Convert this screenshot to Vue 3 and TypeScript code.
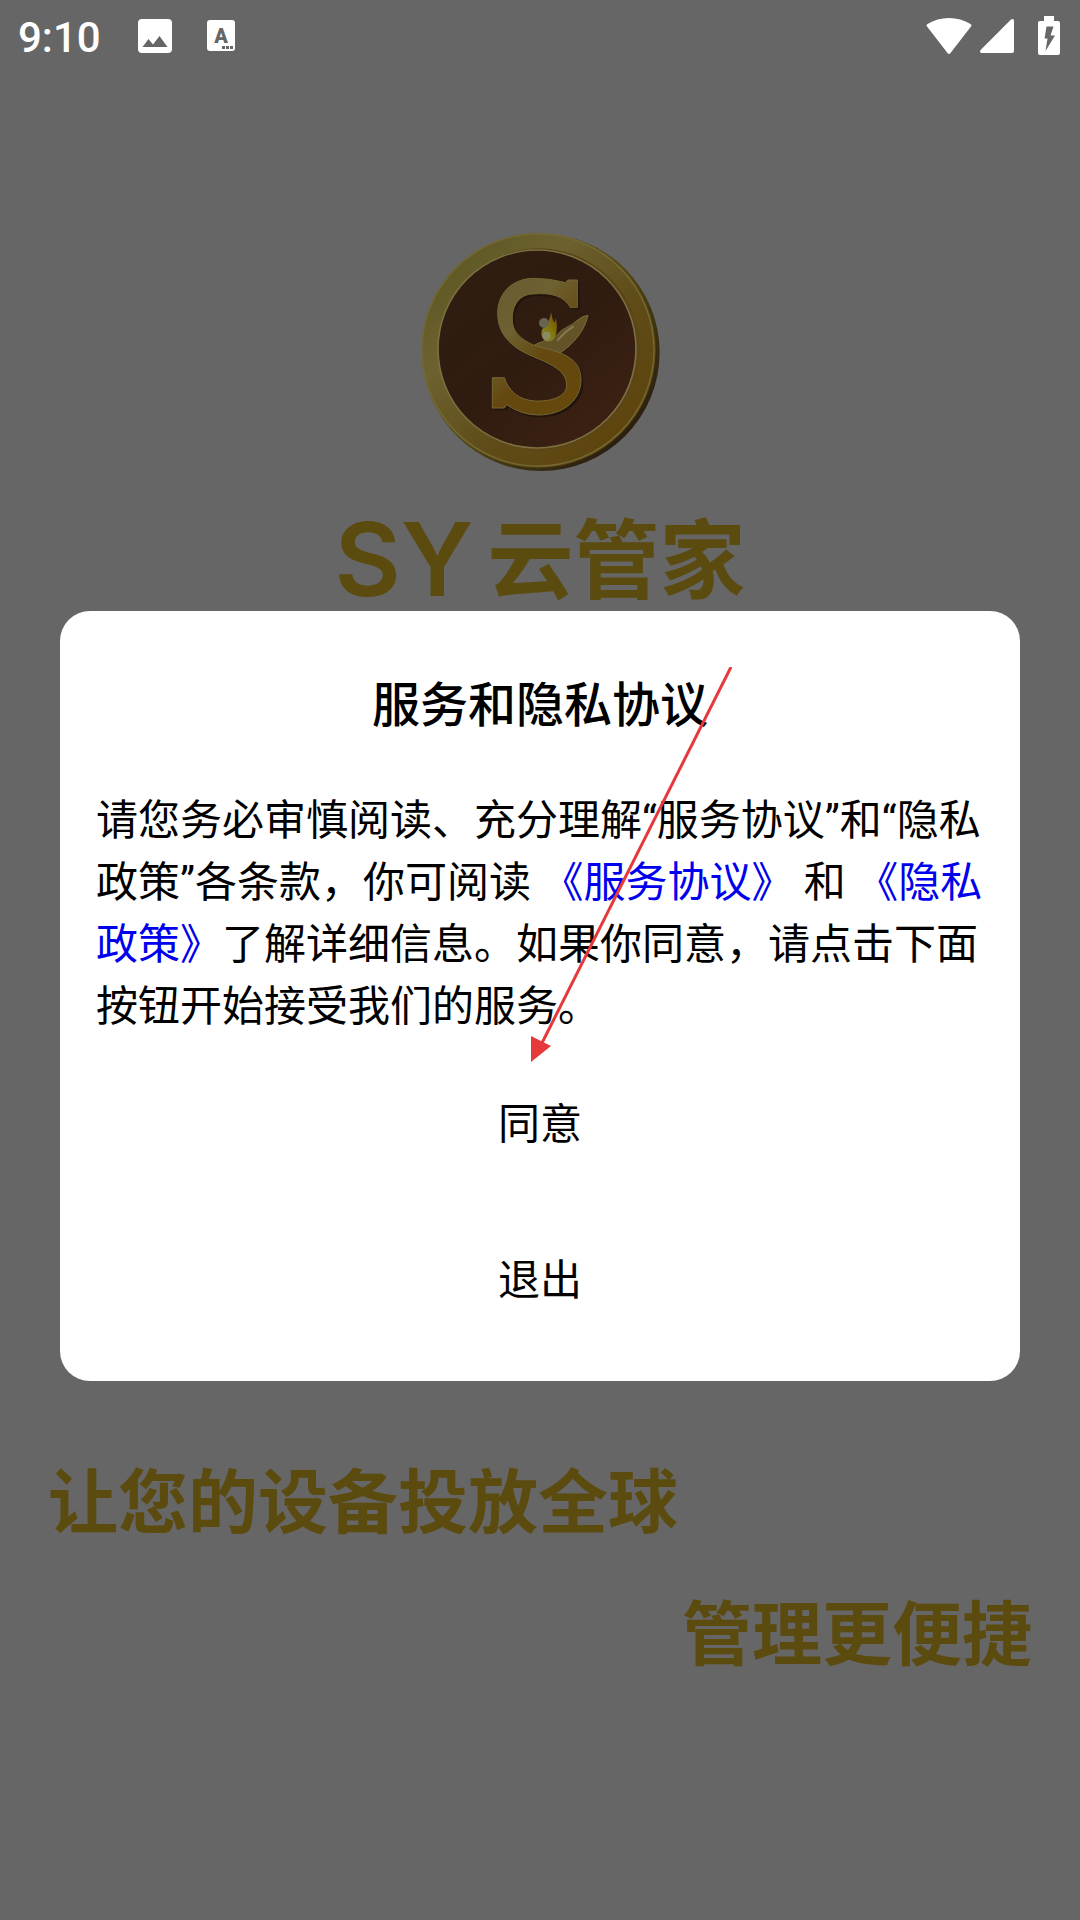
<script setup lang="ts">
import { ref } from 'vue'

const open = ref(true)

function close(): void {
  open.value = false
}
</script>

<template>
  <div class="screen">
    <header class="status">
      <span class="time">9:10</span>
      <svg class="picture" width="34" height="34" viewBox="0 0 34 34" aria-hidden="true">
        <path fill="#fff" fill-rule="evenodd" d="M4 0h26a4 4 0 0 1 4 4v26a4 4 0 0 1-4 4H4a4 4 0 0 1-4-4V4a4 4 0 0 1 4-4zM4.500 28h25L21.500 17l-6.500 8.500-4.500-5.500z" />
      </svg>
      <svg class="letter" width="28" height="32" viewBox="0 0 28 32" aria-hidden="true">
        <rect width="28" height="31" rx="3" fill="#fff" />
        <text x="14" y="23" text-anchor="middle" class="letter-a">A</text>
        <path fill="#666" d="M15 26h3v3h-3zM19 26h3v3h-3zM23 26h3v3h-3z" />
      </svg>
      <span class="spacer"></span>
      <svg class="wifi" width="46" height="38" viewBox="0 0 46 38" aria-hidden="true">
        <path fill="#fff" d="M1 9.500Q-.2 8 1.500 7Q11 1 23 1t21.500 6Q46.200 8 45 9.500L24.500 36q-1.500 1.800-3 0z" />
      </svg>
      <svg class="signal" width="34" height="34" viewBox="0 0 34 34" aria-hidden="true">
        <path fill="#fff" d="M.6 31L31 .6Q34-1 34 2v30q0 2-2 2H2q-3 0-1.400-3z" />
      </svg>
      <svg class="battery" width="22" height="40" viewBox="0 0 22 40" aria-hidden="true">
        <path fill="#fff" d="M6 0h10v5h4q2 0 2 2v30q0 2-2 2H2q-2 0-2-2V7q0-2 2-2h4z" />
        <path fill="#666" d="M8.500 10.500h7l-3 9h4.500L7.500 35l2-12.500H6.500z" />
      </svg>
    </header>

    <main class="splash">
      <svg class="logo" width="280" height="280" viewBox="0 0 840 840" role="img" aria-label="SY云管家">
        <defs>
          <linearGradient id="rim" x1="0" y1="0.1" x2="0.9" y2="1">
            <stop offset="0" stop-color="#5b551f" />
            <stop offset="0.3" stop-color="#6c6230" />
            <stop offset="0.6" stop-color="#5f4c18" />
            <stop offset="1" stop-color="#5e420a" />
          </linearGradient>
          <linearGradient id="edge" x1="0" y1="0" x2="1" y2="1">
            <stop offset="0" stop-color="#66602b" />
            <stop offset="0.55" stop-color="#4b4313" />
            <stop offset="0.85" stop-color="#2b2010" />
            <stop offset="1" stop-color="#231b11" />
          </linearGradient>
          <linearGradient id="face" x1="0.1" y1="0" x2="0.9" y2="1">
            <stop offset="0" stop-color="#2e1e10" />
            <stop offset="0.5" stop-color="#301b10" />
            <stop offset="1" stop-color="#3d2213" />
          </linearGradient>
          <linearGradient id="gold" x1="0" y1="0" x2="0.7" y2="1">
            <stop offset="0" stop-color="#655c31" />
            <stop offset="0.35" stop-color="#6e6132" />
            <stop offset="0.65" stop-color="#64480f" />
            <stop offset="1" stop-color="#66480c" />
          </linearGradient>
          <linearGradient id="flame" x1="0" y1="1" x2="0.7" y2="0">
            <stop offset="0" stop-color="#82834f" />
            <stop offset="0.5" stop-color="#827a0d" />
            <stop offset="1" stop-color="#76510a" />
          </linearGradient>
        </defs>
        <circle cx="423" cy="427" r="356" fill="url(#edge)" />
        <circle cx="415" cy="421" r="352" fill="url(#rim)" />
        <circle cx="414" cy="420" r="348" fill="none" stroke="#746a35" stroke-width="4" />
        <circle cx="416" cy="417" r="302" fill="#5b431a" />
        <circle cx="411" cy="417" r="297" fill="url(#face)" stroke="#7b703e" stroke-width="5" />
        <path fill="#21140b" transform="translate(7 7)" d="M532 210h-29l-6 8Q450 205 400 205C330 207 293 255 293 310C293 380 345 418 400 440C460 465 500 485 500 525C500 562 450 575 405 573C355 570 328 544 313 503h-36v91h36l7-10Q365 615 415 615C490 615 543 570 543 510C543 460 510 439 470 425L400 405C362 388 337 365 337 330C335 285 360 252 400 252C452 247 492 258 511 292h21z" />
        <path fill="#645327" stroke="#796b37" stroke-width="3" d="M396 410C423 391 455 391 474 372C489 353 511 350 528 334Q548 316 564 316C556 354 530 390 500 414L474 434Z" />
        <path fill="url(#gold)" stroke="#746733" stroke-width="3" d="M532 210h-29l-6 8Q450 205 400 205C330 207 293 255 293 310C293 380 345 418 400 440C460 465 500 485 500 525C500 562 450 575 405 573C355 570 328 544 313 503h-36v91h36l7-10Q365 615 415 615C490 615 543 570 543 510C543 460 510 439 470 425L400 405C362 388 337 365 337 330C335 285 360 252 400 252C452 247 492 258 511 292h21z" />
        <path d="M472 392Q492 367 521 349" fill="none" stroke="#817a52" stroke-width="6" />
        <path fill="url(#flame)" d="M430 388C418 370 426 350 441 345Q449 327 454 306Q455 326 463 338Q468 331 467 322C475 353 470 392 449 394Q437 397 430 388z" />
        <circle cx="432" cy="339" r="15" fill="#67654f" />
        <circle cx="440" cy="377" r="12" fill="#8a8b60" />
      </svg>
      <h1 class="brand"><span class="latin">SY</span><span class="name">云管家</span></h1>
      <p class="slogan first">让您的设备投放全球</p>
      <p class="slogan second">管理更便捷</p>
    </main>

    <div v-if="open" class="overlay">
      <section class="dialog" role="dialog" aria-modal="true" aria-labelledby="title">
        <h2 id="title" class="title">服务和隐私协议</h2>
        <p class="text">请您务必审慎阅读、充分理解“服务协议”和“隐私政策”各条款，你可阅读 <a href="#service">《服务协议》</a> 和 <a href="#privacy">《隐私政策》</a>了解详细信息。如果你同意，请点击下面按钮开始接受我们的服务。</p>
        <button type="button" class="action" @click="close">同意</button>
        <button type="button" class="action" @click="close">退出</button>
        <svg class="arrow" width="204" height="396" viewBox="0 0 204 396" aria-hidden="true">
          <path d="M201 0L11 378" stroke="#e5393c" stroke-width="3" fill="none" />
          <path d="M1 369l20 10L1 395z" fill="#e5393c" />
        </svg>
      </section>
    </div>
  </div>
</template>

<style>
body {
  margin: 0;
  background: #666;
}
</style>

<style scoped>
.screen {
  position: relative;
  display: flex;
  flex-direction: column;
  min-height: 100vh;
  background: #666;
  font-family: Roboto, "Noto Sans CJK SC", sans-serif;
}

.status {
  display: flex;
  align-items: center;
  height: 72px;
  padding: 0 20px 0 18px;
  color: #fff;
}

.time {
  padding-top: 4px;
  font-size: 42px;
  font-weight: 500;
  line-height: 68px;
}

.picture {
  margin-left: 37px;
}

.letter {
  margin-left: 35px;
}

.letter-a {
  font-size: 20px;
  font-weight: 900;
  fill: #666;
}

.spacer {
  flex: 1;
}

.signal {
  margin-left: 8px;
}

.battery {
  margin-left: 24px;
}

.splash {
  display: flex;
  flex-direction: column;
  padding: 138px 48px 0;
  color: #5b4b0f;
}

.logo {
  align-self: center;
}

.brand {
  display: flex;
  align-items: flex-start;
  justify-content: center;
  gap: 14px;
  height: 120px;
  margin: 9px 0 0;
}

.latin {
  font-family: Inter, sans-serif;
  font-size: 102px;
  font-weight: 600;
  line-height: 120px;
}

.name {
  font-family: "Noto Sans CJK SC", sans-serif;
  font-size: 86px;
  line-height: 112px;
}

.slogan {
  margin: 0;
  font-family: "Noto Sans CJK SC", sans-serif;
  font-size: 70px;
  font-weight: 700;
  line-height: 100px;
}

.first {
  margin-top: 829px;
}

.second {
  margin-top: 32px;
  text-align: right;
}

.overlay {
  position: absolute;
  inset: 72px 0 0;
  display: flex;
  align-items: center;
  padding: 0 60px;
}

.dialog {
  position: relative;
  display: flex;
  flex: 1;
  flex-direction: column;
  padding: 63px 36px 27px;
  border-radius: 30px;
  background: #fff;
  color: #000;
}

.title {
  margin: 0 0 52px;
  font-size: 48px;
  font-weight: 500;
  line-height: 64px;
  text-align: center;
}

.text {
  margin: 0 0 4px;
  font-size: 42px;
  line-height: 62px;
}

.text a {
  color: #00e;
  text-decoration: none;
}

.action {
  height: 156px;
  padding: 0;
  border: 0;
  background: none;
  color: inherit;
  font: inherit;
  font-size: 42px;
}

.arrow {
  position: absolute;
  top: 56px;
  left: calc(50% - 10px);
}
</style>
